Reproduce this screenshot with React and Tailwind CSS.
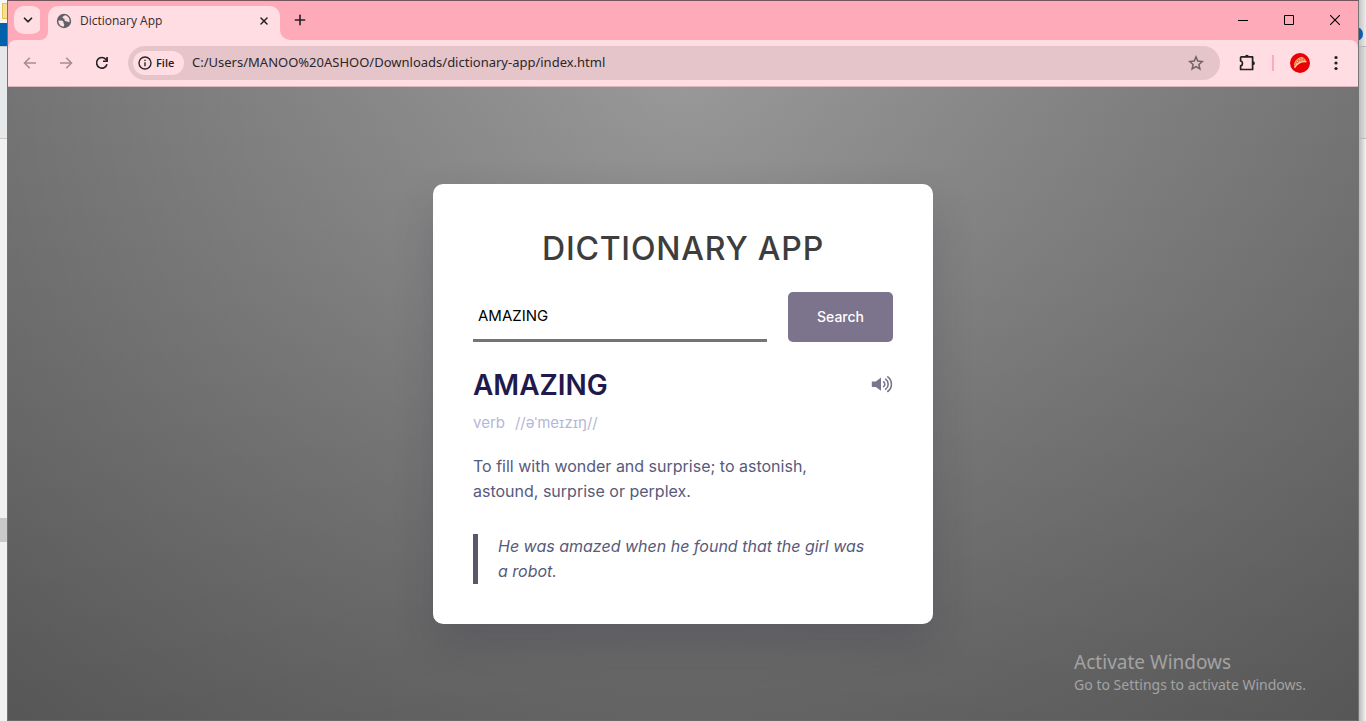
import React from "react";
import { X, Plus, ChevronDown } from "lucide-react";

function BackdropLeft() {
  return (
    <div className="w-[7px] shrink-0 flex flex-col bg-[#f1f1f1]" aria-hidden="true">
      <div className="h-[23px] flex flex-col bg-[#f6f6f6] pt-[3px] pl-[2px]">
        <div className="h-4 border border-r-0 border-[#e3c451] bg-[#f5df94]" />
      </div>
      <div className="h-[23px] bg-[#0062ad]" />
      <div className="h-[93px] border-y border-[#c9cacc] bg-[#e6e8ea]" />
      <div className="mt-[379px] h-6 bg-[#c9c9c9]" />
    </div>
  );
}

function BackdropRight() {
  return (
    <div className="w-[7px] shrink-0 flex flex-col overflow-hidden bg-[#e9e9e9]" aria-hidden="true">
      <div className="h-[47px] border-b border-[#b5b5b5] bg-linear-to-r from-[#c4c4c4] to-[#ececec] pt-[27px]">
        <div className="-ml-[10px] h-[14px] w-[14px] rounded-full bg-[#0d5cab]" />
      </div>
      <div className="h-[92px] border-b border-[#b9b9b9] bg-linear-to-r from-[#bcbcbc] to-[#e0e1e2]" />
      <div className="flex-1 bg-linear-to-r from-[#b9b9b9] to-[#f4f4f4]" />
    </div>
  );
}

function GlobeIcon() {
  return (
    <svg viewBox="0 0 16 16" className="h-4 w-4 shrink-0" aria-hidden="true">
      <circle cx="8" cy="8" r="7.2" fill="#5f6368" />
      <path
        d="M2.4 7.4 C4 7.4 5.6 7.2 6.8 8 C8.2 8.9 6.8 9.8 7.8 10.6 C8.6 11.2 8 12.2 8 13.6 C4.8 13.6 2.2 11 2.4 7.4 Z M8.8 2.3 C8 3.4 6.6 3.2 6.4 4.6 C7.2 5.2 7 5.8 8.4 5.8 C8.6 7.4 8.4 8 10 8.2 C11.6 8.2 12 9 13.4 9.2 C14.4 5.8 11.8 2.5 8.8 2.3 Z"
        fill="#ffdde3"
      />
    </svg>
  );
}

function ArrowIcon({ forward }) {
  return (
    <svg viewBox="0 0 16 16" className="h-4 w-4" fill="none" stroke="#a68d93" strokeWidth="1.6" aria-hidden="true">
      {forward ? <path d="M2 8h11.4M8.2 2.7 13.5 8l-5.3 5.3" /> : <path d="M14 8H2.6M7.8 2.7 2.5 8l5.3 5.3" />}
    </svg>
  );
}

function ReloadIcon() {
  return (
    <svg viewBox="0 0 16 16" className="h-4 w-4" aria-hidden="true">
      <path d="M13 9.2A5.3 5.3 0 1 1 11.9 4.4L13.2 5.8" fill="none" stroke="#202124" strokeWidth="1.6" />
      <path d="M13.9 2v5H9V5.4h3.2V2z" fill="#202124" />
    </svg>
  );
}

function InfoIcon() {
  return (
    <svg viewBox="0 0 14 14" className="h-[14px] w-[14px]" aria-hidden="true">
      <circle cx="7" cy="7" r="6" fill="none" stroke="#2a2527" strokeWidth="1.4" />
      <path d="M6.3 6.2h1.4v4H6.3zM6.3 3.7h1.4v1.4H6.3z" fill="#2a2527" />
    </svg>
  );
}

function StarIcon() {
  return (
    <svg viewBox="0 0 16 16" className="h-4 w-4" fill="none" stroke="#6d6367" strokeWidth="1.5" aria-hidden="true">
      <path d="M8 1.9l1.8 4.2 4.6.4-3.5 3 1 4.5L8 11.6 4.1 14l1-4.5-3.5-3 4.6-.4z" />
    </svg>
  );
}

function PuzzleIcon() {
  return (
    <svg viewBox="0 0 18 18" className="h-[18px] w-[18px]" aria-hidden="true">
      <path
        d="M3.2 2.9H14.6v12.6H2.6v-3.6a2.6 2.6 0 0 0 0-5V3.5z"
        fill="none"
        stroke="#202124"
        strokeWidth="1.7"
        strokeLinejoin="round"
      />
      <path d="M7 2.6a1.9 1.9 0 0 1 3.8 0zM15 7.3a1.9 1.9 0 0 1 0 3.8z" fill="#202124" />
    </svg>
  );
}

function AvatarIcon() {
  return (
    <svg viewBox="0 0 20 20" className="h-5 w-5" aria-hidden="true">
      <circle cx="10" cy="10" r="10" fill="#e80205" />
      <path d="M4.2 15.4C3 9.4 7 4.4 12.4 3.8C14.8 5 16.2 6.6 16.8 8.8C12 8.6 7.4 11 4.2 15.4Z" fill="#f06a45" />
      <path d="M4.6 14.6C7 10.6 11.4 8.2 16.4 8.8" fill="none" stroke="#fbd79b" strokeWidth="1.3" />
      <path d="M4.6 12C4.8 8 8 4.8 12.2 4.4" fill="none" stroke="#fbc08a" strokeWidth="0.8" />
      <path d="M7 8.4h1M9.2 6.6h1M9.2 8.4h1M11.6 5.6h1M11.6 7.4h1M13.8 7h1M6.2 10.6h1" stroke="#ffe0a8" strokeWidth="1" />
    </svg>
  );
}

function SpeakerIcon() {
  return (
    <svg viewBox="0 0 22 18" className="h-[18px] w-[22px]" aria-hidden="true">
      <path d="M.8 5.6h4L10 1.4v13.4L4.8 11H.8z" fill="#7b748c" />
      <path
        d="M12.6 5.8a3 3 0 0 1 0 4.8M14.7 3.2a6.3 6.3 0 0 1 0 10M16.8.9a9.2 9.2 0 0 1 0 14.6"
        fill="none"
        stroke="#7b748c"
        strokeWidth="1.6"
        strokeLinecap="round"
      />
    </svg>
  );
}

function TitleBar() {
  return (
    <header className="flex h-[39px] bg-[#ffaab8]">
      <div className="flex items-start pl-[6px] pt-[5px]">
        <button aria-label="Search tabs" className="flex h-7 w-7 items-center justify-center rounded-[10px] bg-[#ffdde3]">
          <ChevronDown className="h-[14px] w-[14px]" color="#202124" strokeWidth={3} />
        </button>
      </div>
      <div className="-ml-[2px] flex w-2 items-end bg-[#ffdde3]">
        <div className="h-full w-2 rounded-br-lg bg-[#ffaab8]" />
      </div>
      <div className="flex w-[232px] bg-[#ffaab8] pt-[5px]">
        <div className="flex flex-1 items-center rounded-t-[10px] bg-[#ffdde3] px-2 pb-[5px]">
          <GlobeIcon />
          <span className="ml-2 flex-1 font-['Open_Sans',sans-serif] text-[12px] text-[#33292c]">Dictionary App</span>
          <button aria-label="Close tab" className="flex h-4 w-4 items-center justify-center">
            <X className="h-3 w-3" color="#202124" strokeWidth={3} />
          </button>
        </div>
      </div>
      <div className="w-3 bg-[#ffdde3]">
        <div className="h-full rounded-bl-[10px] bg-[#ffaab8]" />
      </div>
      <button aria-label="New tab" className="flex h-[38px] w-4 items-center justify-center">
        <Plus className="h-4 w-4 shrink-0" color="#202124" strokeWidth={2.4} />
      </button>
      <div className="ml-auto flex h-[38px]">
        <button aria-label="Minimize" className="flex w-[46px] items-center justify-center">
          <svg viewBox="0 0 10 10" className="h-[10px] w-[10px]"><path d="M0 5.5h10" stroke="#000" /></svg>
        </button>
        <button aria-label="Maximize" className="flex w-[46px] items-center justify-center">
          <svg viewBox="0 0 10 10" className="h-[10px] w-[10px]"><path d="M.5.5h9v9h-9z" fill="none" stroke="#000" /></svg>
        </button>
        <button aria-label="Close" className="flex w-[46px] items-center justify-center">
          <svg viewBox="0 0 10 10" className="h-[10px] w-[10px]"><path d="M0 0l10 10M10 0 0 10" stroke="#000" strokeWidth="1.1" /></svg>
        </button>
      </div>
    </header>
  );
}

function Toolbar() {
  return (
    <div className="bg-[#ffaab8]">
      <div className="flex h-[47px] items-center rounded-t-lg border-b border-[#d9b6bd] bg-[#ffdde3]">
        <nav className="ml-[14px] flex gap-5">
          <button aria-label="Back"><ArrowIcon /></button>
          <button aria-label="Forward"><ArrowIcon forward /></button>
          <button aria-label="Reload"><ReloadIcon /></button>
        </nav>
        <div className="ml-[18px] flex h-[34px] flex-1 items-center rounded-full bg-[#e5c5ca] pl-[5px] pr-4">
          <button className="flex h-6 w-[51px] items-center gap-1 rounded-full bg-[#ffdde3] pl-[5px] font-['Open_Sans',sans-serif] text-[11px] font-semibold text-[#202124]">
            <InfoIcon />
            File
          </button>
          <input
            aria-label="Address"
            readOnly
            defaultValue="C:/Users/MANOO%20ASHOO/Downloads/dictionary-app/index.html"
            className="ml-2 min-w-0 flex-1 bg-transparent font-['Noto_Sans',sans-serif] text-[13px] text-[#2c2628] outline-none"
          />
          <button aria-label="Bookmark this page"><StarIcon /></button>
        </div>
        <div className="flex items-center pl-[18px]">
          <button aria-label="Extensions"><PuzzleIcon /></button>
          <div className="ml-4 h-4 w-[2px] bg-[#ffaab8]" />
          <button aria-label="Profile" className="ml-4"><AvatarIcon /></button>
          <button aria-label="Menu" className="ml-4 mr-3 flex w-5 justify-center">
            <svg viewBox="0 0 4 16" className="h-4 w-1" fill="#202124">
              <circle cx="2" cy="2.5" r="1.6" /><circle cx="2" cy="8" r="1.6" /><circle cx="2" cy="13.5" r="1.6" />
            </svg>
          </button>
        </div>
      </div>
    </div>
  );
}

function DictionaryCard() {
  return (
    <section className="w-[500px] max-w-full rounded-[10px] bg-white p-10 font-['Inter',sans-serif] shadow-[0_20px_40px_rgba(38,33,61,0.2)]">
      <h1 className="pt-[3px] text-center text-[32px] leading-[44px] font-medium tracking-wide text-[#3d3d3d]">DICTIONARY APP</h1>
      <form className="mt-[21px] flex gap-[21px]" onSubmit={(e) => e.preventDefault()}>
        <input
          aria-label="Word"
          defaultValue="AMAZING"
          className="h-[50px] min-w-0 flex-1 border-b-3 border-[#757575] px-[5px] text-[15px] text-black outline-none"
        />
        <button className="h-[50px] w-[105px] rounded-[5px] bg-[#7b748c] text-[14px] font-medium text-white">Search</button>
      </form>
      <div className="mt-5 flex items-center justify-between">
        <h2 className="text-[28px] leading-[46px] font-semibold text-[#1f194c]">AMAZING</h2>
        <button aria-label="Play pronunciation"><SpeakerIcon /></button>
      </div>
      <p className="mt-[3px] flex gap-[10px] text-[15px] leading-6 text-[#b3b8d8]">
        <span>verb</span>
        <span>//əˈmeɪzɪŋ//</span>
      </p>
      <p className="mt-[19px] pr-10 text-[16px] leading-[25px] text-[#575a7b]">
        To fill with wonder and surprise; to astonish, astound, surprise or perplex.
      </p>
      <blockquote className="mt-[30px] border-l-5 border-[#5a576c] pl-5 pr-5 text-[16px] leading-[25px] text-[#575a7b] italic">
        He was amazed when he found that the girl was a robot.
      </blockquote>
    </section>
  );
}

export default function App() {
  return (
    <div className="flex min-h-screen overflow-hidden">
      <BackdropLeft />
      <div className="flex min-w-0 flex-1 flex-col border border-t-[#76545b] border-x-[#747474] border-b-[#6e6668]">
        <TitleBar />
        <Toolbar />
        <main className="relative flex flex-1 items-center justify-center bg-[#989898] bg-[linear-gradient(to_bottom,rgba(255,255,255,0.15)_0%,rgba(0,0,0,0.15)_100%),radial-gradient(at_top_center,rgba(255,255,255,0.40)_0%,rgba(0,0,0,0.40)_120%)] bg-blend-multiply">
          <DictionaryCard />
          <aside className="absolute right-[52px] bottom-6 font-['Noto_Sans',sans-serif] text-[#a3a3a3]">
            <p className="text-[19px] leading-6">Activate Windows</p>
            <p className="text-[14px] leading-[22px]">Go to Settings to activate Windows.</p>
          </aside>
        </main>
      </div>
      <BackdropRight />
    </div>
  );
}
